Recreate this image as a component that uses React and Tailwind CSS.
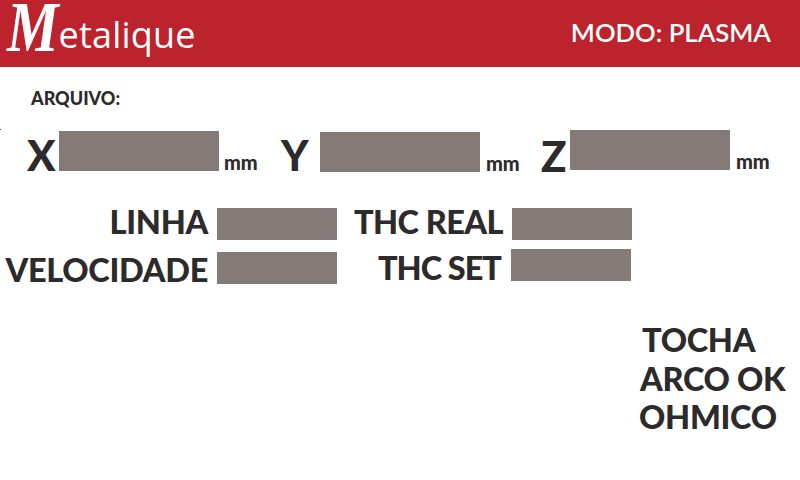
export default function App() {
  const box = "bg-[#847a77]";
  return (
    <div className="w-[800px] h-[480px] bg-white overflow-hidden relative font-['Lato',sans-serif] text-[#2d2a2b] font-black">
      <header className="h-[67px] bg-[#bc232c] flex items-start justify-between text-white">
        <div className="flex items-start pl-[7px]">
          <span className="font-['Liberation_Serif',serif] italic font-bold text-[58px] leading-[40px] mt-[12px] scale-y-[1.25] origin-[50%_40px]">M</span>
          <span className="font-['Open_Sans',sans-serif] font-medium text-[36px] leading-[50px] tracking-[0.2px] mt-[10px]">etalique</span>
        </div>
        <div className="text-[25.7px] font-semibold pr-[29px] leading-[64px]">MODO: PLASMA</div>
      </header>

      <div className="pl-[31px] pt-[21px] text-[18px] leading-[20px]">ARQUIVO:</div>

      <div className="absolute left-0 top-[129px] w-[1px] h-[1px] bg-[#555]"></div>

      <section className="flex items-start mt-[22px] h-[50px]">
        <div className="flex items-start w-[280px] pl-[27px]">
          <span className="w-[32px] text-[42px] leading-[50px]">X</span>
          <div className={`${box} w-[160px] h-[40px] mt-[1px]`}></div>
          <span className="ml-[5px] mt-[20px] text-[20px] leading-[24px] tracking-[-0.2px]">mm</span>
        </div>
        <div className="flex items-start w-[261px] pl-[1px]">
          <span className="w-[39px] text-[42px] leading-[50px]">Y</span>
          <div className={`${box} w-[160px] h-[40px] mt-[2px]`}></div>
          <span className="ml-[6px] mt-[21px] text-[20px] leading-[24px] tracking-[-0.2px]">mm</span>
        </div>
        <div className="flex items-start">
          <span className="w-[29px] text-[42px] leading-[50px] mt-[1px]">Z</span>
          <div className={`${box} w-[160px] h-[40px]`}></div>
          <span className="ml-[6px] mt-[19px] text-[20px] leading-[24px] tracking-[-0.2px]">mm</span>
        </div>
      </section>

      <section className="flex items-start mt-[28px]">
        <div className="w-[337px] flex flex-col gap-[12px]">
          <div className="flex items-start justify-end gap-[9px] h-[32px]">
            <span className="text-[32.5px] leading-[27px] tracking-[-0.3px]">LINHA</span>
            <div className={`${box} w-[120px] h-[32px]`}></div>
          </div>
          <div className="flex items-start justify-end gap-[9px] h-[32px]">
            <span className="text-[32.5px] leading-[36px] tracking-[-0.3px] whitespace-nowrap">VELOCIDADE</span>
            <div className={`${box} w-[120px] h-[32px]`}></div>
          </div>
        </div>
        <div className="w-[295px] flex flex-col gap-[9px]">
          <div className="flex items-start justify-end gap-[9px] h-[32px]">
            <span className="text-[32.5px] leading-[28px] tracking-[-0.55px]">THC REAL</span>
            <div className={`${box} w-[120px] h-[32px]`}></div>
          </div>
          <div className="flex items-start justify-end gap-[10px] h-[32px] pr-[1px]">
            <span className="text-[32.5px] leading-[38px] tracking-[-1px]">THC SET</span>
            <div className={`${box} w-[120px] h-[32px]`}></div>
          </div>
        </div>
      </section>

      <section className="flex flex-col items-start mt-[40px] pl-[639px] text-[32.5px] tracking-[-0.3px]">
        <div className="ml-[3px] leading-[32px]">TOCHA</div>
        <div className="ml-[1px] mt-[7px] leading-[32px] whitespace-nowrap">ARCO OK</div>
        <div className="mt-[6px] leading-[32px]">OHMICO</div>
      </section>
    </div>
  );
}
